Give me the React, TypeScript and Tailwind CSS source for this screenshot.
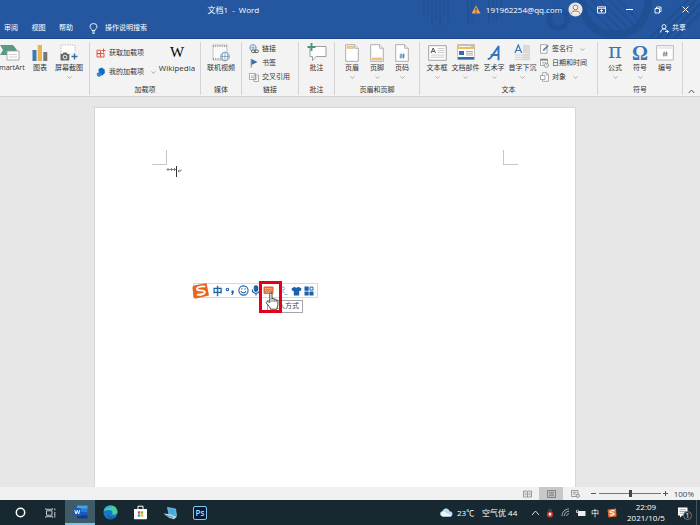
import type { ReactNode } from "react";

function Caret() {
  return (
    <svg className="h-[3px] w-[5px]" viewBox="0 0 5 3" aria-hidden="true">
      <path d="M0.5 0.5 L2.5 2.3 L4.5 0.5" fill="none" stroke="#999" strokeWidth="0.8" />
    </svg>
  );
}

function Big({ icon, label, caret, w, size = "text-[7px]" }: { icon: ReactNode; label: string; caret?: boolean; w: string; size?: string }) {
  return (
    <button type="button" className={`flex h-[42px] shrink-0 flex-col items-center whitespace-nowrap ${w}`}>
      <span className="flex h-[21px] items-center justify-center">{icon}</span>
      <span className={`leading-[10px] ${size}`}>{label}</span>
      <span className="flex h-[8px] items-center">{caret && <Caret />}</span>
    </button>
  );
}

function Small({ icon, label, caret }: { icon: ReactNode; label: string; caret?: boolean }) {
  return (
    <button type="button" className="flex h-[14px] items-center gap-[3px] whitespace-nowrap text-[7px] leading-[10px]">
      {icon}
      <span>{label}</span>
      {caret && <span className="pl-1"><Caret /></span>}
    </button>
  );
}

function Group({ name, w, children }: { name: string; w: string; children: ReactNode }) {
  return (
    <section className={`flex shrink-0 flex-col pt-[3px] pb-px ${w}`} aria-label={name || undefined}>
      <div className="flex flex-1 flex-col border-r border-[#d4d4d4]">
        <div className="flex h-[42px] justify-center">{children}</div>
        <h2 className="mt-px flex h-[10px] items-center justify-center text-[7px] font-normal leading-[10px]">{name}</h2>
      </div>
    </section>
  );
}

const Doc = ({ kind }: { kind: "head" | "foot" | "num" }) => (
  <svg className="h-[18px] w-[14px]" viewBox="0 0 14 18">
    <path d="M0.7 0.7h9l3.6 3.6v13H0.7z" fill="#fff" stroke="#999" strokeWidth="0.8" />
    <path d="M9.7 0.7v3.6h3.6" fill="#eee" stroke="#999" strokeWidth="0.7" />
    {kind === "head" && <path d="M2.4 2.3h6v2h-6z" fill="#f5d9a3" stroke="#d99a42" strokeWidth="0.6" />}
    {kind === "foot" && <path d="M2.2 14h9.600v1.800h-9.600z" fill="#f5d389" stroke="#dda64c" strokeWidth="0.6" />}
    {kind === "num" && <path d="M6.200 9.500l-.4 5M8.700 9.500l-.4 5M4.600 11h5.400M4.400 13h5.400" stroke="#3579b0" strokeWidth="0.800" />}
  </svg>
);

const SmartArtIcon = (
  <svg className="h-[18px] w-[22px]" viewBox="0 0 22 18">
    <path d="M1 1h13l4 5-4 5H1l3-5z" fill="#5a9b84" />
    <path d="M8 7h12v9H8z" fill="#fff" stroke="#9b9b9b" strokeWidth="0.800" />
    <path d="M10 10.500h8M10 13h8" stroke="#c4c4c4" strokeWidth="0.800" />
  </svg>
);
const ChartIcon = (
  <svg className="h-[18px] w-[16px]" viewBox="0 0 16 18">
    <path d="M0.500 6h4v11h-4z" fill="#3f79b5" /><path d="M5.700 1h4.300v16H5.700z" fill="#efb34e" /><path d="M11.300 8h4v9h-4z" fill="#777" />
  </svg>
);
const ShotIcon = (
  <svg className="h-[18px] w-[18px]" viewBox="0 0 18 18">
    <path d="M1 10V1h14v7" fill="#fff" stroke="#aaa" strokeWidth="0.700" strokeDasharray="1.500 1" />
    <path d="M0.500 10h2l1-1.500h3L7.500 10h1.800v6.500H0.500z" fill="#666" />
    <circle cx="5" cy="13" r="1.900" fill="#666" stroke="#fff" strokeWidth="0.900" />
    <path d="M14.500 9.500v6M11.500 12.500h6" stroke="#356fa8" strokeWidth="1.400" />
  </svg>
);
const StoreIcon = (
  <svg className="h-[10px] w-[10px]" viewBox="0 0 10 10" fill="none" stroke="#d0503b" strokeWidth="0.900">
    <path d="M1 2.200h3.500v3.400H1zM1 5.600h3.500V9H1zM4.500 5.600H8V9H4.500zM7.500 0.500v4M5.500 2.500h4" />
  </svg>
);
const AddinIcon = (
  <svg className="h-[10px] w-[10px]" viewBox="0 0 10 10">
    <path d="M2.500 2L5.800 0.400l2.800 2 .3 3.600-2.600 2.600-3.300-1z" fill="#176bc0" />
    <path d="M0.800 6l2.500-.8 2 1.500-.2 2.300-2.200.9-2-1.400z" fill="#3088d7" />
  </svg>
);
const VideoIcon = (
  <svg className="h-[18px] w-[18px]" viewBox="0 0 18 18">
    <path d="M1 1h14v15H1z" fill="#fafafa" stroke="#a5a5a5" strokeWidth="0.600" />
    <path d="M1 2.200h14M1 14.800h8" stroke="#777" strokeWidth="1.200" strokeDasharray="1 1.200" />
    <circle cx="13" cy="12.500" r="4.300" fill="#f3f8fb" stroke="#5b85a8" strokeWidth="0.800" />
    <path d="M8.700 12.500h8.600M13 8.200v8.600M11 9c-1 2-1 5 0 7M15 9c1 2 1 5 0 7" stroke="#5b85a8" strokeWidth="0.600" fill="none" />
  </svg>
);
const LinkIcon = (
  <svg className="h-[10px] w-[10px]" viewBox="0 0 10 10" fill="none">
    <circle cx="4" cy="3.800" r="3.200" stroke="#5e8bb0" strokeWidth="0.800" />
    <path d="M0.800 3.800h6.400M4 0.600v6.400" stroke="#5e8bb0" strokeWidth="0.600" />
    <rect x="2.500" y="6" width="4" height="2.600" rx="1.300" stroke="#555" strokeWidth="0.900" fill="#f3f3f3" />
    <rect x="5.500" y="6" width="4" height="2.600" rx="1.300" stroke="#555" strokeWidth="0.900" />
  </svg>
);
const FlagIcon = (
  <svg className="h-[10px] w-[10px]" viewBox="0 0 10 10"><path d="M2.200 1v8.500" stroke="#777" strokeWidth="0.900" /><path d="M2.500 1l6 3-6 3z" fill="#3671ad" /></svg>
);
const CrossIcon = (
  <svg className="h-[10px] w-[10px]" viewBox="0 0 10 10" fill="#fff" stroke="#888" strokeWidth="0.700">
    <path d="M0.500 1.500h6v6h-6zM5 3h4.500v6.500H5z" /><path d="M2 4h2M2 5.500h2M6.200 5h2M6.200 7h2" />
  </svg>
);
const CommentIcon = (
  <svg className="h-[19px] w-[20px]" viewBox="0 0 20 19">
    <path d="M3 3.500h16v10H9l-3.500 4v-4H3z" fill="#fff" stroke="#959595" strokeWidth="0.900" />
    <path d="M4.500 0v8M0.500 4h8" stroke="#4c957b" strokeWidth="1.900" />
  </svg>
);
const TextBoxIcon = (
  <svg className="h-[16px] w-[19px]" viewBox="0 0 19 16" fill="none">
    <path d="M0.700 0.700h17.600v14.600H0.700z" fill="#fff" stroke="#999" strokeWidth="0.900" />
    <path d="M3 8l2.200-5L7.500 8M3.800 6.400h2.900" stroke="#555" strokeWidth="1" />
    <path d="M9.500 3.500h7M9.500 5.500h7M9.500 7.500h7M3 10h13.500M3 12.200h13.500" stroke="#b6b6b6" strokeWidth="0.700" />
  </svg>
);
const PartsIcon = (
  <svg className="h-[17px] w-[18px]" viewBox="0 0 18 17">
    <path d="M0.500 0.500h17v15h-17z" fill="#fff" stroke="#aaa" strokeWidth="0.700" />
    <path d="M1 1h16v4H1z" fill="#edbc68" /><path d="M2 2.500h12" stroke="#fff" strokeWidth="0.800" />
    <path d="M2 7h5v4H2zM1 13h16v2.500H1z" fill="#326ba6" /><path d="M9 7.500h7M9 9.200h7M9 11h7" stroke="#8a8a8a" strokeWidth="0.700" />
  </svg>
);
const ArtIcon = (
  <svg className="h-[18px] w-[14px]" viewBox="0 0 14 18">
    <path d="M1.500 15Q3 15 5 12L11.500 2.500V15.500M4.500 11h7" fill="none" stroke="#3475b5" strokeWidth="2" strokeLinejoin="round" strokeLinecap="round" />
  </svg>
);
const DropCapIcon = (
  <svg className="h-[18px] w-[17px]" viewBox="0 0 17 18" fill="none">
    <path d="M9 1h7v15H9z" fill="#e6e6e6" />
    <path d="M9 2h7M9 4h7M9 6h7M9 8h7M1 11h15M1 13.300h15M1 15.600h15" stroke="#c8c8c8" strokeWidth="0.800" />
    <path d="M1 9L4.300 1 7.700 9M2.200 6.500h4.300" stroke="#3475b5" strokeWidth="1.200" />
  </svg>
);
const SignIcon = (
  <svg className="h-[10px] w-[9px]" viewBox="0 0 9 10" fill="#fff"><path d="M0.500 0.700h6.500v8.600H0.500z" stroke="#888" strokeWidth="0.700" /><path d="M2.800 7.200l.6-2L7.600 1l1.100 1-4.300 4.400z" fill="#4b7d9f" /></svg>
);
const DateIcon = (
  <svg className="h-[10px] w-[9px]" viewBox="0 0 9 10" fill="#fff"><path d="M0.500 1h7v6.500h-7z" stroke="#888" strokeWidth="0.700" /><path d="M0.500 1h7v1.700h-7z" fill="#888" /><path d="M2 4.500h4M2 6h2" stroke="#999" strokeWidth="0.700" /><circle cx="6.500" cy="7.300" r="2.100" stroke="#777" strokeWidth="0.700" /><path d="M6.500 6v1.300h1" stroke="#666" strokeWidth="0.500" /></svg>
);
const ObjectIcon = (
  <svg className="h-[10px] w-[9px]" viewBox="0 0 9 10" fill="#fff" stroke="#888" strokeWidth="0.700"><path d="M2.500 0.700h4l2 2v6.600h-6z" /><path d="M0.500 3.500h4.500v4H0.500z" /><path d="M6.200 0.700v2.200h2.200" /></svg>
);
const NumberIcon = (
  <svg className="h-[16px] w-[18px]" viewBox="0 0 18 16" fill="#fff">
    <path d="M0.700 0.700h16.600v14.300H0.700z" stroke="#a5a5a5" strokeWidth="0.800" />
    <path d="M2.500 3h13" stroke="#bbb" strokeWidth="0.700" />
    <path d="M8.300 6.500l-.5 5M10.600 6.500l-.5 5M6.800 8.200h5M6.600 10h5" stroke="#777" strokeWidth="0.800" />
  </svg>
);

const winBtn = "flex h-[19px] w-7 items-center justify-center";

function Header() {
  return (
    <header className="relative flex h-[39px] flex-col border-b border-[#1b468c] bg-[#2457a0] text-white">
      <svg className="absolute top-0 right-0 h-[38px] w-[290px]" viewBox="0 0 290 38" fill="none" aria-hidden="true">
        <path d="M14 0v16M18 0v18M22 0v24M26 0v21M30 0v25M34 0v16M38 0v20M58 0v24M62 0v20M79 0v23M83 0v18M87 0v21M91 0v18" stroke="#205094" strokeWidth="1.500" />
        <circle cx="148" cy="19" r="9" stroke="#1f5094" strokeWidth="5" />
        <circle cx="205" cy="2" r="33" stroke="#1f5094" strokeWidth="8" />
        <path d="M172 0l34 34M181 0l30 30M190 0l27 27M199 0l24 24M208 0l20 20" stroke="#205196" strokeWidth="2" />
        <path d="M240 38l38-38M248 38l38-38M256 38l34-34M265 38l25-25" stroke="#205094" strokeWidth="2.500" />
      </svg>
      <div className="relative flex h-[19px] items-center">
        <h1 className="w-2/3 text-center text-[8px] font-normal">文档1&nbsp; -&nbsp; Word</h1>
        <div className="flex w-1/3 items-center justify-end">
          <svg className="h-[9px] w-[10px]" viewBox="0 0 10 9"><path d="M5 0.500L9.500 8.500h-9z" fill="#f2a557" /><path d="M5 2.800v3M5 6.700v1" stroke="#4b3a28" strokeWidth="1.200" /></svg>
          <span className="ml-1 w-[78px] text-center text-[8px]">191962254@qq.com</span>
          <button type="button" aria-label="账户" className="mx-[5px]">
            <svg className="h-[15px] w-[15px]" viewBox="0 0 15 15"><circle cx="7.500" cy="7.500" r="7" fill="#e8e4df" /><circle cx="7.500" cy="5.500" r="2.300" fill="#f6f1eb" stroke="#95745b" strokeWidth="0.900" /><path d="M3.300 12c.3-4 8.100-4 8.400 0" fill="#f6f1eb" stroke="#95745b" strokeWidth="0.900" /></svg>
          </button>
          <button type="button" aria-label="功能区显示选项" className={winBtn}>
            <svg className="h-[8px] w-[9px]" viewBox="0 0 9 8" fill="none" stroke="#fff" strokeWidth="0.900"><path d="M0.500 0.800h8v6.200h-8zM0.500 2.300h8M4.500 6.500V3.700M3 5l1.500-1.300L6 5" /></svg>
          </button>
          <button type="button" aria-label="最小化" className={winBtn}><span className="h-px w-[7px] bg-white" /></button>
          <button type="button" aria-label="还原" className={winBtn}>
            <svg className="h-[8px] w-[8px]" viewBox="0 0 8 8" fill="none" stroke="#fff" strokeWidth="0.900"><path d="M1 2.500h4.500V7H1zM2.500 2.500V1H7v4.500H5.500" /></svg>
          </button>
          <button type="button" aria-label="关闭" className={winBtn}>
            <svg className="h-[7px] w-[7px]" viewBox="0 0 7 7" stroke="#fff"><path d="M0.500 0.500l6 6M6.500 0.500l-6 6" /></svg>
          </button>
        </div>
      </div>
      <nav className="relative flex h-[20px] items-center pr-[14px] pl-1 text-[7px]">
        <button type="button" className="w-[14px] whitespace-nowrap">审阅</button>
        <button type="button" className="ml-[13px] w-[15px] whitespace-nowrap">视图</button>
        <button type="button" className="ml-[13px] w-[14px] whitespace-nowrap">帮助</button>
        <svg className="ml-4 h-[11px] w-[9px]" viewBox="0 0 9 11" fill="none" stroke="#fff" strokeWidth="0.900"><path d="M3 7.500C3 6 1 5.500 1 3.700a3.500 3.200 0 0 1 7 0C8 5.500 6 6 6 7.500zM3 9h3M3.500 10.400h2" /></svg>
        <button type="button" className="ml-[7px]">操作说明搜索</button>
        <button type="button" className="ml-auto flex items-center gap-[3px]">
          <svg className="h-[9px] w-[9px]" viewBox="0 0 9 9" fill="none" stroke="#fff" strokeWidth="0.900"><circle cx="4" cy="2.700" r="2.100" /><path d="M0.600 8.500c0-2.500 1.500-3.500 3.400-3.500s2.500.8 3 1.500M5 7.500h3.500M7.200 6.200l1.300 1.300-1.300 1.200" /></svg>
          共享
        </button>
      </nav>
    </header>
  );
}

function Ribbon() {
  return (
    <div className="flex h-[58px] border-b border-[#d2d2d2] bg-[#f3f3f3] text-[#333]">
      <Group name="" w="w-[90px]">
        <div className="flex w-full justify-end overflow-hidden pr-[5px]">
          <Big w="w-[32px]" icon={SmartArtIcon} label="SmartArt" />
          <Big w="w-[28px]" icon={ChartIcon} label="图表" />
          <Big w="w-[30px]" icon={ShotIcon} label="屏幕截图" caret />
        </div>
      </Group>
      <Group name="加载项" w="w-[111px]">
        <div className="flex w-full justify-between pr-[4px] pl-[6px]">
          <div className="flex flex-col gap-[5px] pt-[4px]">
            <Small icon={StoreIcon} label="获取加载项" />
            <Small icon={AddinIcon} label="我的加载项" caret />
          </div>
          <Big w="w-[38px]" size="text-[8px]" icon={<span className="font-['Liberation_Serif',serif] text-[15px] leading-none text-black">W</span>} label="Wikipedia" />
        </div>
      </Group>
      <Group name="媒体" w="w-[41px]"><Big w="w-[30px]" icon={VideoIcon} label="联机视频" /></Group>
      <Group name="链接" w="w-[57px]">
        <div className="flex w-full flex-col pl-[7px]">
          <Small icon={LinkIcon} label="链接" />
          <Small icon={FlagIcon} label="书签" />
          <Small icon={CrossIcon} label="交叉引用" />
        </div>
      </Group>
      <Group name="批注" w="w-[36px]"><Big w="w-[25px]" icon={CommentIcon} label="批注" /></Group>
      <Group name="页眉和页脚" w="w-[85px]">
        <Big w="w-[25px]" icon={<Doc kind="head" />} label="页眉" caret />
        <Big w="w-[25px]" icon={<Doc kind="foot" />} label="页脚" caret />
        <Big w="w-[25px]" icon={<Doc kind="num" />} label="页码" caret />
      </Group>
      <Group name="文本" w="w-[178px]">
        <div className="flex w-full pl-[3px]">
          <Big w="w-[28px]" icon={TextBoxIcon} label="文本框" caret />
          <Big w="w-[29px]" icon={PartsIcon} label="文档部件" caret />
          <Big w="w-[28px]" icon={ArtIcon} label="艺术字" caret />
          <Big w="w-[29px]" icon={DropCapIcon} label="首字下沉" caret />
          <div className="flex flex-col pl-[3px]">
            <Small icon={SignIcon} label="签名行" caret />
            <Small icon={DateIcon} label="日期和时间" />
            <Small icon={ObjectIcon} label="对象" caret />
          </div>
        </div>
      </Group>
      <Group name="符号" w="w-[85px]">
        <Big w="w-[25px]" icon={<span className="pb-[3px] font-['DejaVu_Serif',serif] text-[21px] leading-[18px] text-[#3a76b4]">π</span>} label="公式" caret />
        <Big w="w-[25px]" icon={<span className="font-['Liberation_Serif',serif] text-[20px] leading-[18px] font-bold text-[#3a76b4]">Ω</span>} label="符号" caret />
        <Big w="w-[25px]" icon={NumberIcon} label="编号" />
      </Group>
      <div className="flex flex-1 items-end justify-center pb-[2px]">
        <button type="button" aria-label="折叠功能区">
          <svg className="h-[5px] w-[7px]" viewBox="0 0 7 5" fill="none" stroke="#555"><path d="M0.700 4L3.500 1l2.800 3" /></svg>
        </button>
      </div>
    </div>
  );
}

function InputBar() {
  return (
    <>
      <div className="absolute top-[283px] left-[193px] flex h-[15px] w-[125px] items-center border border-[#cfdbe6] bg-white">
        <svg className="-ml-[2px] h-[18px] w-[18px] shrink-0" viewBox="0 0 18 18">
          <path d="M2 3.500L14.500 1 17 13.500 4 16.500Q2 17 1.500 15L0.500 6Q0.300 4 2 3.500z" fill="#e8641f" />
          <path d="M13.200 4.600C9 4 4.500 5 5 7.200c.5 1.900 7.300.5 7.800 2.700.3 2-4 3.400-8 2.700" fill="none" stroke="#fff" strokeWidth="1.900" />
        </svg>
        <div className="flex flex-1 items-center justify-between pr-[3px] pl-[2px] text-[#1d62a8]">
          <button type="button" className="w-[11px] text-[10px] leading-[12px] font-bold">中</button>
          <button type="button" aria-label="标点"><svg className="h-[10px] w-[10px]" viewBox="0 0 10 10"><circle cx="2.500" cy="3.500" r="1.200" fill="none" stroke="currentColor" strokeWidth="1.100" /><path d="M6.500 4.500h2.200v2.200L7.500 9H6.300l.8-2h-.6z" fill="currentColor" /></svg></button>
          <button type="button" aria-label="表情"><svg className="h-[11px] w-[11px]" viewBox="0 0 11 11" fill="none" stroke="currentColor" strokeWidth="1.100"><circle cx="5.500" cy="5.500" r="4.600" /><path d="M3 6.200c.7 2.200 4.300 2.200 5 0M3.900 3.300v1.200M7.100 3.300v1.200" /></svg></button>
          <button type="button" aria-label="语音"><svg className="h-[11px] w-[10px]" viewBox="0 0 10 11" fill="none" stroke="currentColor" strokeWidth="1.200"><rect x="3.300" y="0.800" width="3.400" height="5.500" rx="1.700" fill="currentColor" /><path d="M1.300 4.500c0 5 7.400 5 7.400 0M5 8.500V10.500" /></svg></button>
          <button type="button" aria-label="输入方式"><svg className="h-[9px] w-[11px]" viewBox="0 0 11 9"><rect x="0.500" y="0.500" width="10" height="7.500" rx="1" fill="#e36b35" /><path d="M2 2.500h7M2 4.200h7M3 6.200h5" stroke="#f8ccb5" strokeWidth="0.900" strokeDasharray="1.200 0.600" /></svg></button>
          <button type="button" aria-label="登录"><svg className="h-[11px] w-[12px]" viewBox="0 0 12 11" fill="none" stroke="#8fb0d0"><circle cx="7" cy="3.500" r="1.600" /><path d="M3.500 9.500c.5-3 4-3.500 5.500-1.500M8.500 9.500h3" /></svg></button>
          <button type="button" aria-label="皮肤"><svg className="h-[10px] w-[11px]" viewBox="0 0 11 10"><path d="M3.500 0.800L0.500 2.500l1 2.800 1.300-.5V9.500h5.400V4.800l1.300.5 1-2.800-3-1.700C6.800 2 4.200 2 3.500 0.800z" fill="currentColor" /></svg></button>
          <button type="button" aria-label="工具箱"><svg className="h-[10px] w-[10px]" viewBox="0 0 10 10" fill="currentColor"><path d="M0.500 0.500h4.200v4.200H0.500zM5.400 5.400h4.100v4.100H5.400zM0.500 5.400h4.200v4.100H0.500z" /><path d="M6 1.100h3v3H6z" fill="none" stroke="currentColor" /></svg></button>
        </div>
      </div>
      <div role="tooltip" className="absolute top-[300px] left-[267px] flex h-[13px] w-[36px] items-center justify-center border border-[#a5a5a5] bg-white text-[7px] whitespace-nowrap text-[#444]">输入方式</div>
      <div className="absolute top-[281px] left-[259px] h-[32px] w-[23px] border-[3px] border-[#e3001b]" />
      <svg className="absolute top-[292px] left-[265px] h-[18px] w-[15px]" viewBox="0 0 15 18" aria-hidden="true">
        <path d="M4.800 10.500V2.200c0-1.600 2.200-1.600 2.200 0v5c0-1.300 2-1.300 2.100 0v.5c.2-1 1.900-1 2 .3v.5c.3-.9 1.800-.8 1.800.6v3.600c0 2-1 2.500-1 4.500H5.500c0-2-2-3.400-4-6-.8-1.300.8-2.200 1.800-1.300z" fill="#fff" stroke="#333" strokeWidth="0.900" />
        <path d="M7 7.500v2.500M9.100 7.800v2.200M11.100 8.500v1.700" stroke="#333" strokeWidth="0.700" />
      </svg>
    </>
  );
}

function Document() {
  return (
    <main className="flex min-h-0 flex-1 bg-[#e6e6e6] pt-[10px] pr-[124px] pl-[94px]">
      <article className="flex-1 border border-b-0 border-[#d6d6d6] bg-white px-[57px] pt-[42px]">
        <div className="flex justify-between">
          <span className="h-[15px] w-[15px] border-r border-b border-[#c6c6c6]" />
          <span className="h-[15px] w-[15px] border-b border-l border-[#c6c6c6]" />
        </div>
        <svg className="ml-[14px] h-[13px] w-[18px]" viewBox="0 0 18 13" fill="none" aria-hidden="true">
          <path d="M1 4.500h9M2.500 3l-1.500 1.500 1.500 1.500M5.500 3v3M8.500 3v3M12 6h3V4.500M13.300 4.800L12 6l1.300 1.300" stroke="#777" strokeWidth="0.900" />
          <path d="M10.500 1v11" stroke="#333" />
        </svg>
      </article>
    </main>
  );
}

function StatusBar() {
  return (
    <div className="flex h-[13px] items-center justify-end bg-[#f1f1f1] pr-[6px] text-[#444]">
      <button type="button" aria-label="阅读视图" className="flex h-full w-[24px] items-center justify-center">
        <svg className="h-[8px] w-[9px]" viewBox="0 0 9 8" fill="none" stroke="#777" strokeWidth="0.700"><path d="M0.500 1h3.500l.5.500.500-.500h3.500v6H0.500zM4.500 1.500v5.500M1.500 3h2M1.500 4.700h2M5.500 3h2M5.500 4.700h2" /></svg>
      </button>
      <button type="button" aria-label="页面视图" className="flex h-full w-[24px] items-center justify-center bg-[#c8c8c8]">
        <svg className="h-[8px] w-[9px]" viewBox="0 0 9 8" fill="none" stroke="#666" strokeWidth="0.700"><path d="M0.500 0.500h8v7h-8zM2 2.300h5M2 4h5M2 5.700h5" /></svg>
      </button>
      <button type="button" aria-label="Web 版式" className="flex h-full w-[24px] items-center justify-center">
        <svg className="h-[8px] w-[9px]" viewBox="0 0 9 8" fill="none" stroke="#777" strokeWidth="0.700"><path d="M0.500 0.500h6.500v6h-6.500zM1.800 2.300h4M1.800 4h3" /><circle cx="6.800" cy="5.800" r="1.700" fill="#ddd" /></svg>
      </button>
      <button type="button" aria-label="缩小" className="flex h-full w-[12px] items-center justify-center"><span className="h-px w-[5px] bg-[#555]" /></button>
      <input
        type="range"
        aria-label="显示比例"
        min={0}
        max={100}
        defaultValue={50}
        className="h-[9px] w-[62px] appearance-none bg-transparent [&::-webkit-slider-runnable-track]:h-px [&::-webkit-slider-runnable-track]:bg-[#777] [&::-webkit-slider-thumb]:-mt-[3px] [&::-webkit-slider-thumb]:h-[7px] [&::-webkit-slider-thumb]:w-[3px] [&::-webkit-slider-thumb]:appearance-none [&::-webkit-slider-thumb]:bg-[#444]"
      />
      <button type="button" aria-label="放大" className="flex h-full w-[8px] items-center justify-center">
        <svg className="h-[5px] w-[5px]" viewBox="0 0 5 5" stroke="#555"><path d="M0 2.500h5M2.500 0v5" /></svg>
      </button>
      <span className="w-[25px] text-right text-[8px] leading-[12px]">100%</span>
    </div>
  );
}

const task = "flex h-full w-[30px] shrink-0 items-center justify-center";

function Taskbar() {
  return (
    <footer className="flex h-[25px] items-center bg-[#172830] pl-[5px] text-[8px] text-white">
      <button type="button" aria-label="Cortana" className={task}><svg className="h-[11px] w-[11px]" viewBox="0 0 11 11"><circle cx="5.500" cy="5.500" r="4.200" fill="none" stroke="#fff" strokeWidth="1.500" /></svg></button>
      <button type="button" aria-label="任务视图" className={task}><svg className="h-[10px] w-[11px]" viewBox="0 0 11 10" fill="none" stroke="#ddd" strokeWidth="0.900"><path d="M1.500 2.800h5.500v4.400H1.500zM0.700 0.300v1h7v-1M0.700 9.700v-1h7v1M9.800 0.500v2M9.800 4v5.500" /></svg></button>
      <button type="button" aria-label="Word" className="flex h-full w-[30px] shrink-0 items-center justify-center border-b-2 border-[#76c5ee] bg-[#405b68]">
        <svg className="h-[14px] w-[15px]" viewBox="0 0 15 14"><path d="M4 0.500h10.500v3.300H4z" fill="#41a5ee" /><path d="M4 3.800h10.500v3.200H4z" fill="#2b7cd3" /><path d="M4 7h10.500v3.200H4z" fill="#185abd" /><path d="M4 10.200h10.500v3.300H4z" fill="#103f91" /><path d="M0.500 3.200h7.600v7.600H0.500z" fill="#185abd" /><path d="M1.800 5l1.200 4 1.300-3.700L5.600 9l1.200-4" fill="none" stroke="#fff" strokeWidth="0.900" /></svg>
      </button>
      <button type="button" aria-label="Edge" className={task}>
        <svg className="h-[15px] w-[15px]" viewBox="0 0 15 15"><circle cx="7.500" cy="7.500" r="7" fill="#1878c9" /><path d="M0.600 6.800C1.500-1.500 14-1.500 14.500 6.800c0 3-4.500 3.800-5.500 2.200 1-1.500.3-4-2.500-4C3.500 5 1 5.500 0.600 6.800z" fill="#4fcb9a" /><path d="M0.600 6.800C1.500-.5 9 0 9.500 2.500 6 2 1.500 4 0.600 6.800z" fill="#27b3d5" /><path d="M5 7c-1 4 3 7 8 4.500C9.500 16 3 13 5 7z" fill="#104f99" /></svg>
      </button>
      <button type="button" aria-label="Microsoft Store" className={task}>
        <svg className="h-[15px] w-[15px]" viewBox="0 0 15 15"><path d="M5 4V1.200h5V4" fill="none" stroke="#fff" /><path d="M1 4h13v9.500q0 .8-.8.800H1.800Q1 14.300 1 13.500z" fill="#fff" /><path d="M4.800 6.300h2.400v2.400H4.800z" fill="#e44c2c" /><path d="M7.800 6.300h2.400v2.400H7.800z" fill="#7eb53b" /><path d="M4.800 9.300h2.400v2.400H4.800z" fill="#2d9bd7" /><path d="M7.800 9.300h2.400v2.400H7.800z" fill="#edb72d" /></svg>
      </button>
      <button type="button" aria-label="此电脑" className={task}>
        <svg className="h-[14px] w-[15px]" viewBox="0 0 15 14"><path d="M4.500 1.500l8 1.500 1 6.500-7.500-1z" fill="#43a9e1" stroke="#8ed2f4" strokeWidth="0.700" /><path d="M0.500 7.500l5 .5 8.500 2.500-3 2.800-5-1.500z" fill="#b8d4e5" /><path d="M2 9l8 2.500" stroke="#4b8fbc" /></svg>
      </button>
      <button type="button" aria-label="Photoshop" className={task}>
        <span className="flex h-[14px] w-[14px] items-center justify-center rounded-[2px] border border-[#7cc8f2] bg-[#071d33] text-[8px] font-semibold leading-none text-[#a5dcff]">Ps</span>
      </button>
      <div className="ml-auto flex h-full items-center">
        <svg className="h-[9px] w-[14px]" viewBox="0 0 14 9"><path d="M3.500 8.500a3 2.800 0 0 1 0-5.500C4.500-.5 10-.5 10.500 3.300c4 0 4 5.200 0 5.200z" fill="#b7dcf5" /><path d="M3.500 8.500a2.700 2.500 0 0 1 1-4.700c1.500-.5 3 .7 3.500 2 2-.5 4 .5 4 2.700z" fill="#eaf6ff" /></svg>
        <span className="ml-[4px] w-[20px] whitespace-nowrap">23℃</span>
        <span className="ml-[5px] w-[40px] whitespace-nowrap">空气优 44</span>
        <button type="button" aria-label="显示隐藏的图标" className="ml-[9px]"><svg className="h-[6px] w-[9px]" viewBox="0 0 9 6" fill="none" stroke="#ddd"><path d="M1 5l3.500-4L8 5" /></svg></button>
        <svg className="ml-[6px] h-[10px] w-[8px]" viewBox="0 0 8 10"><ellipse cx="4" cy="6.300" rx="3" ry="3.300" fill="#d8342c" /><circle cx="4" cy="2.500" r="2" fill="#444" /><path d="M2.800 4.800h2.400v2.600H2.800z" fill="#fff" /></svg>
        <svg className="ml-[7px] h-[9px] w-[9px]" viewBox="0 0 9 9" fill="none" stroke="#bbb" strokeWidth="0.900"><path d="M1 8C1 4 4 1 8 1M3.300 8c0-2.700 2-4.700 4.700-4.700M5.700 8c0-1.300 1-2.300 2.300-2.300" /></svg>
        <svg className="ml-[6px] h-[8px] w-[10px]" viewBox="0 0 10 8"><path d="M2 2h7.500v5H2z" fill="#eee" /><path d="M0.500 1v2.500h2M2 0.500v2" stroke="#ddd" fill="none" strokeWidth="0.800" /></svg>
        <span className="ml-[5px] w-[8px]">中</span>
        <svg className="ml-[8px] h-[10px] w-[10px]" viewBox="0 0 10 10"><path d="M0.500 1.500L9 0.500l.5 8-8 1z" fill="#ee6a25" /><path d="M7.500 2.800c-2-.5-4.500 0-4.500 1.200 0 1 4.200.5 4.200 1.800 0 1-2.500 1.500-4.500 1.200" fill="none" stroke="#fff" strokeWidth="1.200" /></svg>
        <div className="ml-[8px] flex w-[42px] flex-col items-center pb-px text-[8px] leading-[11px]">
          <time>22:09</time>
          <time>2021/10/5</time>
        </div>
        <button type="button" aria-label="通知" className="mr-[4px] ml-[10px] flex h-full items-center">
          <span className="relative">
            <svg className="h-[12px] w-[15px]" viewBox="0 0 15 12"><path d="M1 0.500h9.500v8H5L3 10.800V8.500H1z" fill="#fff" /><path d="M2.500 2.700h6.500M2.500 4.500h6.500M2.500 6.300h4" stroke="#888" strokeWidth="0.700" /></svg>
            <span className="absolute top-[4px] left-[6px] flex h-[9px] w-[9px] items-center justify-center rounded-full border border-[#6d7c83] bg-[#172830] text-[7px] leading-none">1</span>
          </span>
        </button>
        <span className="h-full w-px bg-[#47545b]" />
        <span className="w-[3px]" />
      </div>
    </footer>
  );
}

export default function App() {
  return (
    <div className="relative flex h-screen flex-col overflow-hidden bg-[#e6e6e6] font-['Open_Sans','Noto_Sans_CJK_SC',sans-serif]">
      <Header />
      <Ribbon />
      <Document />
      <StatusBar />
      <Taskbar />
      <InputBar />
    </div>
  );
}
